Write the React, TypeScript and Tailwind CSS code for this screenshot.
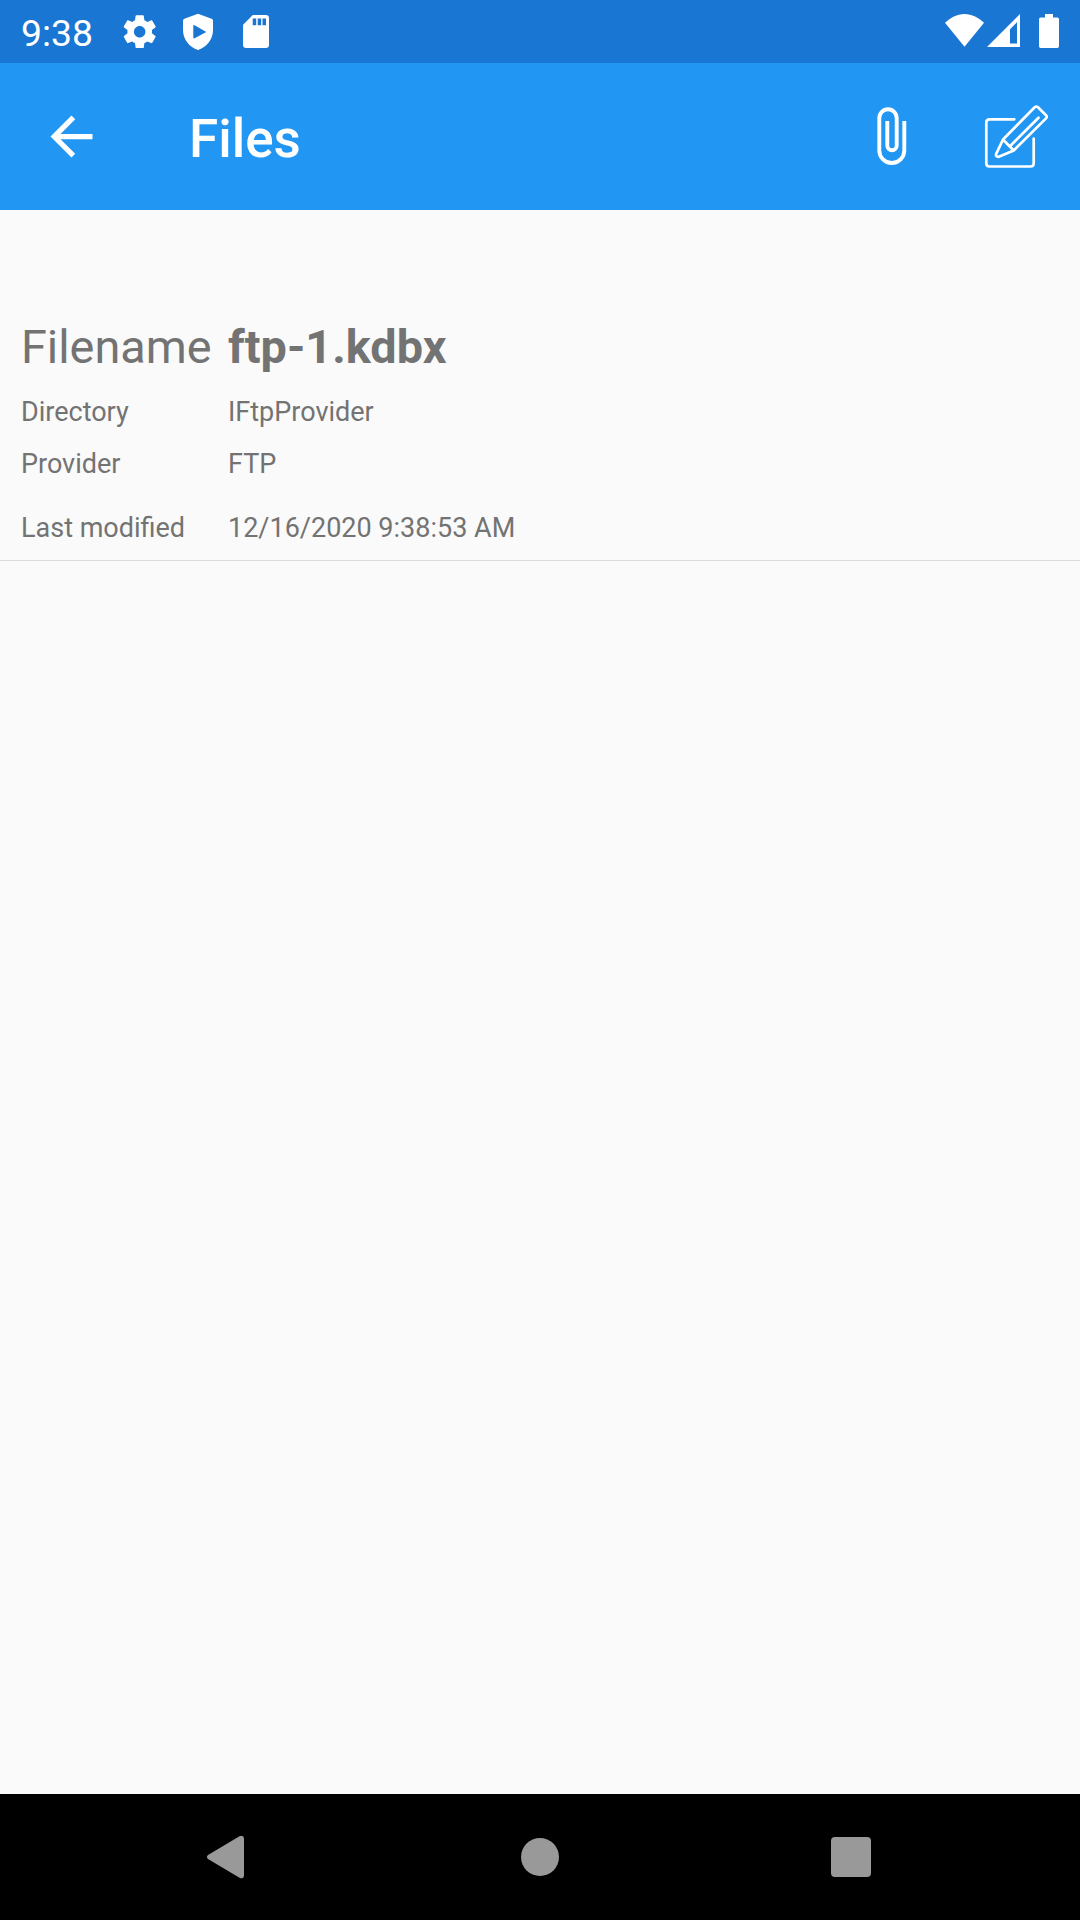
import type { ReactNode } from "react";

type GlyphProps = { box: string; w: string; children: ReactNode };

function Glyph({ box, w, children }: GlyphProps) {
  return (
    <svg viewBox={box} className={`shrink-0 ${w}`} fill="currentColor" aria-hidden="true">
      {children}
    </svg>
  );
}

function StatusBar() {
  return (
    <header className="flex h-[63px] items-start justify-between bg-[#1976d2] text-white">
      <div className="flex">
        <span className="w-[120px] pt-[2px] pl-[21px] text-[37.3px] leading-[63px]">9:38</span>
        <Glyph box="0 0 24 24" w="ml-[0.4px] mt-[12px] h-[39.4px] w-[39.4px]">
          <path d="M19.43 12.98c.04-.32.07-.64.07-.98s-.03-.66-.07-.98l2.11-1.65c.19-.15.24-.42.12-.64l-2-3.46c-.12-.22-.39-.3-.61-.22l-2.49 1c-.52-.4-1.08-.73-1.69-.98l-.38-2.65C14.46 2.18 14.25 2 14 2h-4c-.25 0-.46.18-.49.42l-.38 2.65c-.61.25-1.17.59-1.69.98l-2.49-1c-.23-.09-.49 0-.61.22l-2 3.46c-.13.22-.07.49.12.64l2.11 1.65c-.04.32-.07.65-.07.98s.03.66.07.98l-2.11 1.65c-.19.15-.24.42-.12.64l2 3.46c.12.22.39.3.61.22l2.49-1c.52.4 1.08.73 1.69.98l.38 2.65c.03.24.24.42.49.42h4c.25 0 .46-.18.49-.42l.38-2.65c.61-.25 1.17-.59 1.69-.98l2.49 1c.23.09.49 0 .61-.22l2-3.46c.12-.22.07-.49-.12-.64l-2.11-1.65zM12 15.5c-1.93 0-3.5-1.57-3.5-3.5s1.57-3.5 3.5-3.5 3.5 1.57 3.5 3.5-1.57 3.5-3.5 3.5z" />
        </Glyph>
        <Glyph box="180 12 36 40" w="ml-[20.2px] mt-[12px] h-[40px] w-[36px]">
          <path
            fillRule="evenodd"
            d="M198 13.7 L211.6 18.7 Q213 19.3 213 20.8 V30 C213 39.500 206.500 47.300 198 50 C189.500 47.300 183 39.500 183 30 V20.800 Q183 19.300 184.400 18.700 Z M193.300 25.600 V37.600 Q193.500 38.800 194.600 38.200 L206.300 32 L194.600 25.200 Q193.500 24.700 193.300 25.600 Z"
          />
        </Glyph>
        <Glyph box="240 12 32 40" w="ml-[24px] mt-[12px] h-[40px] w-[32px]">
          <path
            fillRule="evenodd"
            d="M252.800 15 H265.800 Q269 15 269 18.300 V44.700 Q269 48 265.800 48 H246.200 Q243 48 243 44.700 L243.100 24.800 Z M252.700 18.500 V25.300 H256.200 V18.500 Z M257.700 18.500 V25.300 H261.200 V18.500 Z M262.500 18.500 V25.300 H266 V18.500 Z"
          />
        </Glyph>
      </div>
      <Glyph box="940 10 140 43" w="mt-[10px] h-[43px] w-[140px]">
        <path d="M964.500 46.700 L945 22.800 C950.500 17.500 957 14 964.500 14 S978.500 17.500 984 22.800 Z" />
        <path fillRule="evenodd" d="M1020 14 V47 H987 Z M1010 29.300 V43.500 H1017 V22.300 Z" />
        <path d="M1045 14 H1053 V17.500 H1057.300 Q1059 17.500 1059 19.200 V46.300 Q1059 48 1057.300 48 H1040.700 Q1039 48 1039 46.300 V19.200 Q1039 17.500 1040.700 17.500 H1045 Z" />
      </Glyph>
    </header>
  );
}

function AppBar() {
  return (
    <div className="flex h-[147px] items-center bg-[#2196f3] text-white">
      <button className="mb-px ml-[39.500px] flex" aria-label="Back">
        <Glyph box="0 0 24 24" w="h-[63px] w-[63px]">
          <path d="M20 11H7.830l5.590-5.590L12 4l-8 8 8 8 1.410-1.410L7.830 13H20z" />
        </Glyph>
      </button>
      <h1 className="ml-[86.500px] pt-[4px] text-[53px] leading-[60px] font-medium">Files</h1>
      <div className="ml-auto flex">
        <button aria-label="Attach">
          <Glyph box="875 101 34 70" w="mr-[75px] h-[70px] w-[34px]">
            <path
              fill="none"
              stroke="currentColor"
              strokeWidth="3.9"
              d="M904.300 120 V149.500 a12.500 12.500 0 0 1 -25 0 V117 a8.700 8.700 0 0 1 17.400 0 V144.500 a4.700 4.700 0 0 1 -9.400 0 V120"
            />
          </Glyph>
        </button>
        <button aria-label="Edit">
          <Glyph box="984 101 96 70" w="h-[70px] w-[96px]">
            <g fill="none" stroke="currentColor" strokeWidth="2.700" strokeLinecap="round" strokeLinejoin="round">
              <path d="M1014.300 118.300 H989.500 Q986.300 118.300 986.300 121.500 V162.300 Q986.300 165.500 989.500 165.500 H1030.500 Q1033.700 165.500 1033.700 162.300 V137.700" />
              <path d="M1003 138.500 L1034.700 106.300 Q1036.300 104.800 1038 106.300 L1046 114.200 Q1047.500 115.800 1046 117.400 L1013.700 149.500 L998.800 155.800 Q995.300 156 996.200 152.800 Z L1013.700 149.500" />
              <path d="M1038.500 116.700 L1010.500 144.700" />
            </g>
          </Glyph>
        </button>
      </div>
    </div>
  );
}

const details = [
  { label: "Directory", value: "IFtpProvider", row: "mt-[11px]" },
  { label: "Provider", value: "FTP", row: "" },
  { label: "Last modified", value: "12/16/2020 9:38:53 AM", row: "mt-[12px]" },
];

function FileEntry() {
  return (
    <section className="border-b border-[#dadada] pt-[109px] pb-[6px] pl-[21px] whitespace-nowrap text-[#737373]">
      <div className="flex text-[46.800px] leading-[56px]">
        <span className="w-[207px]">Filename</span>
        <span className="font-bold">ftp-1.kdbx</span>
      </div>
      {details.map((d) => (
        <div key={d.label} className={`flex text-[27px] leading-[52px] ${d.row}`}>
          <span className="w-[207px]">{d.label}</span>
          <span>{d.value}</span>
        </div>
      ))}
    </section>
  );
}

function NavigationBar() {
  return (
    <nav className="flex h-[126px] items-center bg-black pl-[206px] text-[#999999]">
      <Glyph box="206 1835 39 44" w="h-[44px] w-[39px]">
        <path d="M239.500 1836.300 Q243.700 1834.500 244 1838.500 V1875.500 Q243.700 1879.500 239.500 1877.700 L208 1859 Q205.800 1857 208 1855 Z" />
      </Glyph>
      <span className="ml-[276px] h-[38px] w-[38px] rounded-full bg-current" />
      <span className="ml-[272px] h-[40px] w-[40px] rounded-[4px] bg-current" />
    </nav>
  );
}

export default function App() {
  return (
    <div className="flex h-[1920px] w-[1080px] flex-col overflow-hidden bg-[#fafafa] font-[Roboto,sans-serif]">
      <StatusBar />
      <AppBar />
      <main className="flex-1">
        <FileEntry />
      </main>
      <NavigationBar />
    </div>
  );
}
